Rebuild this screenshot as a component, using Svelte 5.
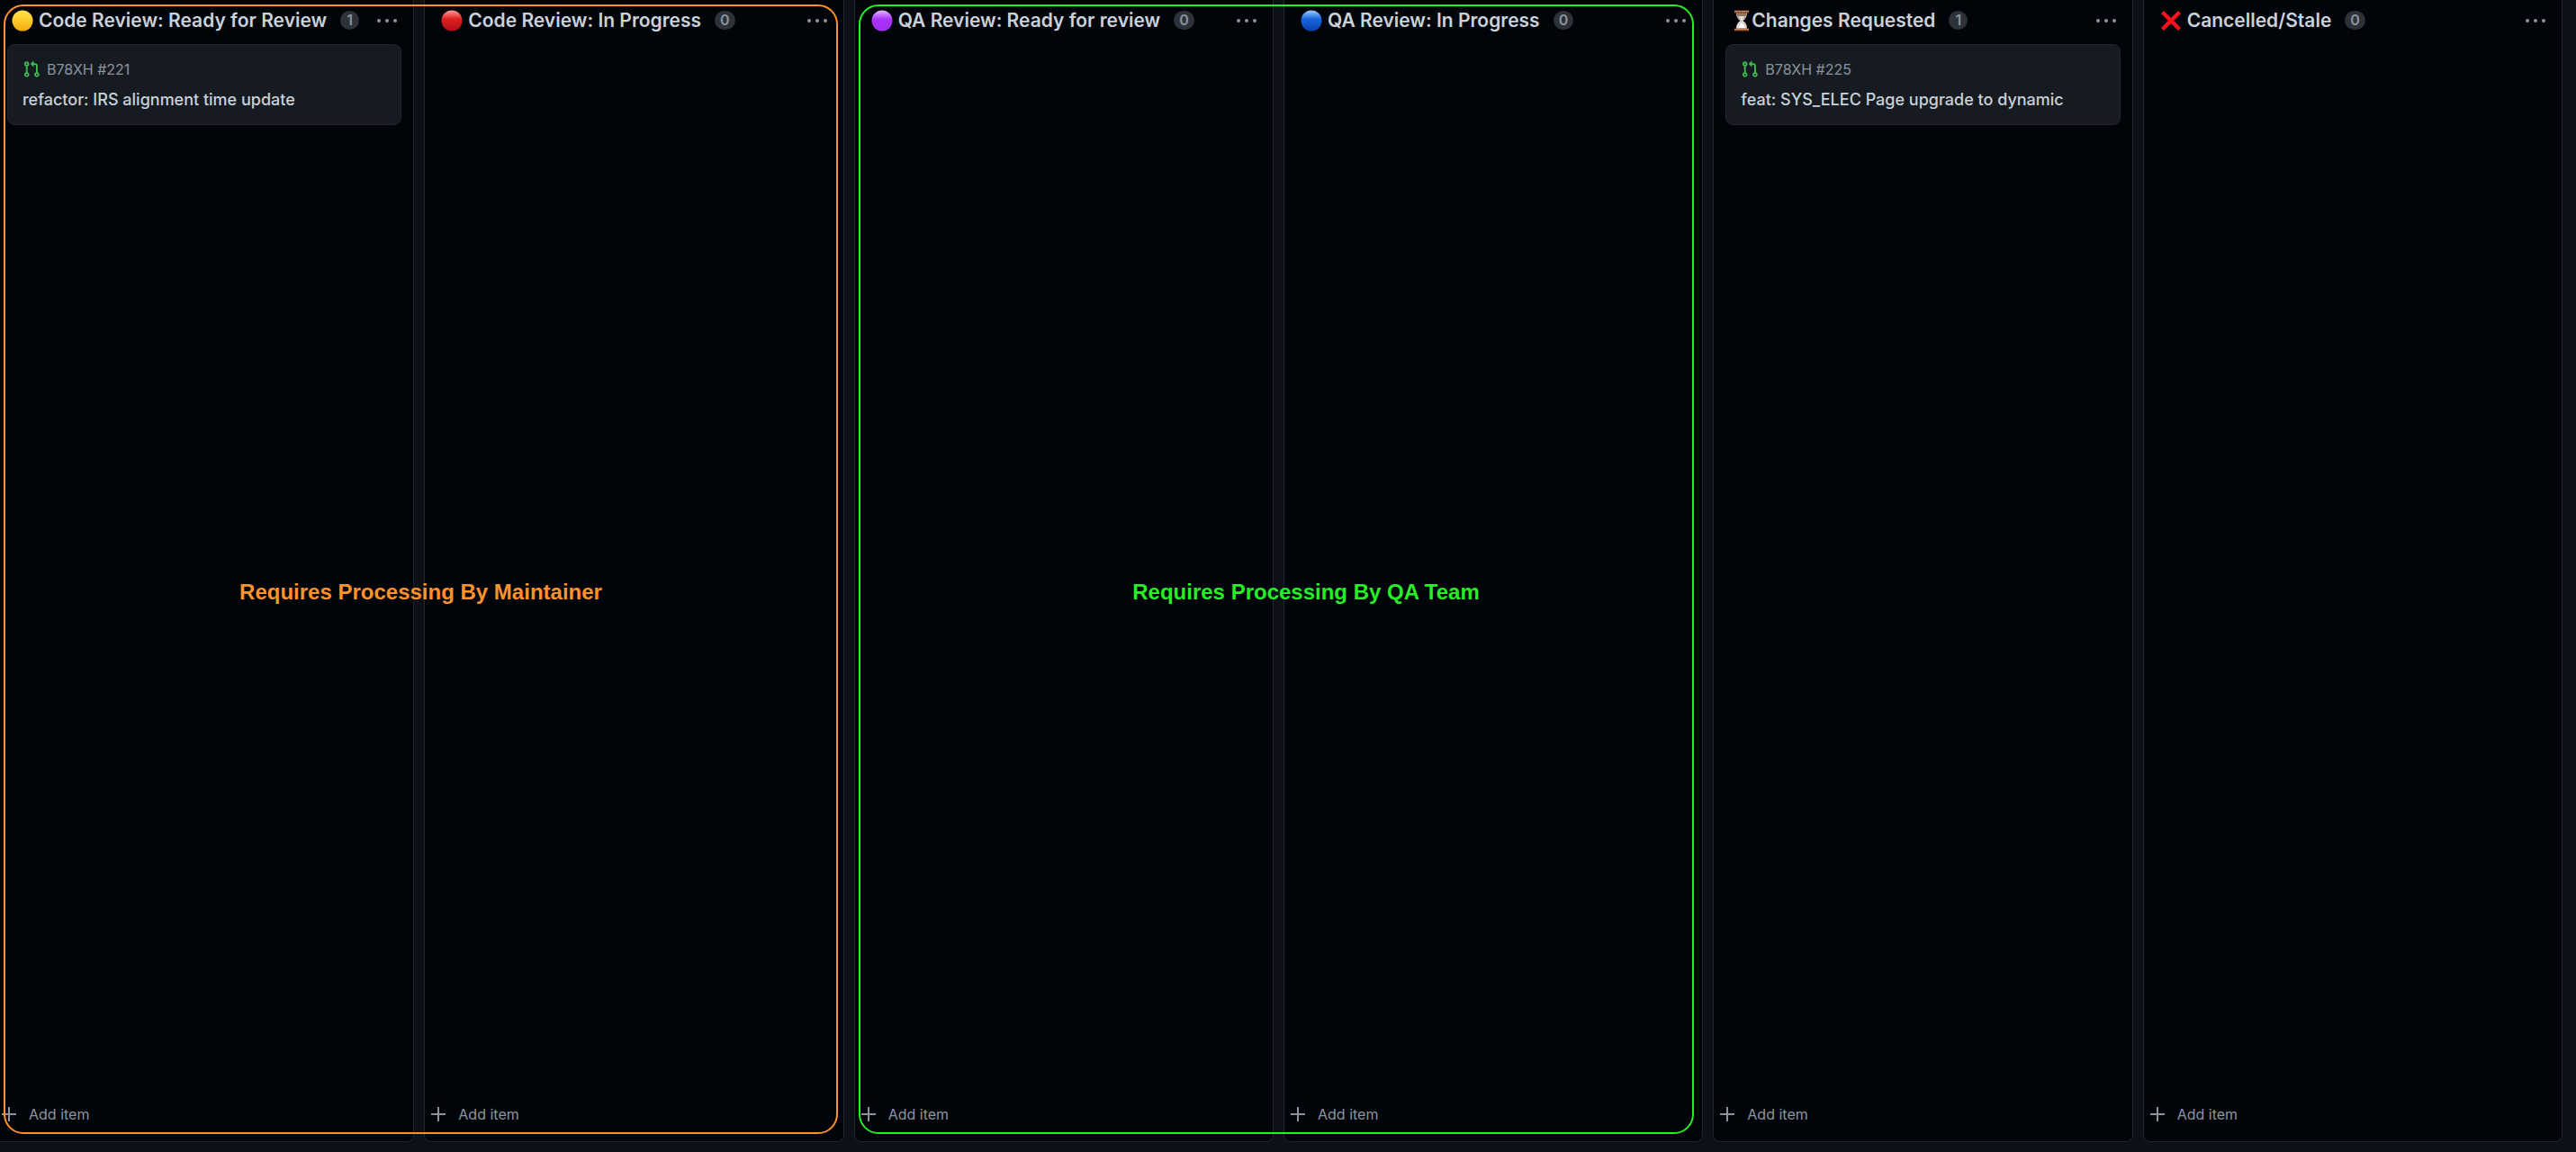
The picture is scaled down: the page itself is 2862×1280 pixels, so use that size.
<script>
  const columns = [
    { icon: 'yellow', title: 'Code Review: Ready for Review', count: 1, card: { ref: 'B78XH #221', title: 'refactor: IRS alignment time update' } },
    { icon: 'red', title: 'Code Review: In Progress', count: 0 },
    { icon: 'purple', title: 'QA Review: Ready for review', count: 0 },
    { icon: 'blue', title: 'QA Review: In Progress', count: 0 },
    { icon: 'hourglass', title: 'Changes Requested', count: 1, card: { ref: 'B78XH #225', title: 'feat: SYS_ELEC Page upgrade to dynamic' } },
    { icon: 'cross', title: 'Cancelled/Stale', count: 0 },
  ];
  const balls = {
    yellow: ['#ffe14a', '#ffd02e', '#f3a712'],
    red: ['#ff8f8f', '#df2020', '#b01016'],
    purple: ['#dfa8ff', '#a935f8', '#a02df0'],
    blue: ['#8fc4ff', '#1766dd', '#0b3fae'],
  };
</script>

<main class="board">
  {#each columns as col}
    <section class="column">
      <header>
        {#if balls[col.icon]}
          <svg class="emoji" viewBox="0 0 24 24" aria-hidden="true">
            <defs>
              <linearGradient id={col.icon} x1="0" y1="0" x2="0" y2="1">
                <stop offset="0.04" stop-color={balls[col.icon][0]} />
                <stop offset="0.42" stop-color={balls[col.icon][1]} />
                <stop offset="1" stop-color={balls[col.icon][2]} />
              </linearGradient>
            </defs>
            <circle cx="12" cy="12" r="11.5" fill="url(#{col.icon})" />
          </svg>
        {:else if col.icon === 'hourglass'}
          <svg class="emoji glass" viewBox="0 0 20 24" aria-hidden="true">
            <path d="M4 3h12c0 5-2 7-4.500 9 2.500 2 4.500 4 4.500 9H4c0-5 2-7 4.500-9C6 10 4 8 4 3z" fill="#d9d3cd" />
            <path d="M4.300 3h11.400c0 3-1 5-3 6.500H7.300C5.300 8 4.300 6 4.300 3z" fill="#8b7668" />
            <path d="M6 7h8l-4 4.500z" fill="#e8dccb" />
            <path d="M10 14l5 6.500H5z" fill="#fff" />
            <path d="M2 0.500h16v3H2zM2 20.500h16v3H2z" fill="#8a4a2b" />
            <path d="M2 1h16v1H2zM2 21h16v1H2z" fill="#c98a60" />
          </svg>
        {:else}
          <svg class="emoji" viewBox="0 0 24 24" aria-hidden="true">
            <path d="M2.500 2.500l19 19M21.500 2.500l-19 19" stroke="#f5101c" stroke-width="4.500" fill="none" />
          </svg>
        {/if}
        <h2>{col.title}</h2>
        <span class="count">{col.count}</span>
        <button class="more" aria-label="Column options">
          <svg viewBox="0 0 24 6" aria-hidden="true">
            <circle cx="3" cy="3" r="2" /><circle cx="12" cy="3" r="2" /><circle cx="21" cy="3" r="2" />
          </svg>
        </button>
      </header>
      {#if col.card}
        <article class="card">
          <div class="ref">
            <svg viewBox="0 0 16 16" aria-hidden="true">
              <path d="M1.500 3.250a2.250 2.250 0 1 1 3 2.122v5.256a2.251 2.251 0 1 1-1.500 0V5.372A2.250 2.250 0 0 1 1.500 3.250Zm5.677-.177L9.573.677A.250.250 0 0 1 10 .854V2.500h1A2.500 2.500 0 0 1 13.500 5v5.628a2.251 2.251 0 1 1-1.500 0V5a1 1 0 0 0-1-1h-1v1.646a.250.250 0 0 1-.427.177L7.177 3.427a.250.250 0 0 1 0-.354ZM3.750 2.500a.750.750 0 1 0 0 1.500.750.750 0 0 0 0-1.500Zm0 9.500a.750.750 0 1 0 0 1.500.750.750 0 0 0 0-1.500Zm8.250.750a.750.750 0 1 0 1.500 0 .750.750 0 0 0-1.500 0Z" />
            </svg>
            <span>{col.card.ref}</span>
          </div>
          <a href="#item">{col.card.title}</a>
        </article>
      {/if}
      <button class="add">
        <svg viewBox="0 0 16 16" aria-hidden="true"><path d="M8 0v16M0 8h16" /></svg>
        <span>Add item</span>
      </button>
    </section>
  {/each}
  <div class="frame maintainer"><span>Requires Processing By Maintainer</span></div>
  <div class="frame qa"><span>Requires Processing By QA Team</span></div>
</main>

<style>
  :global(body) {
    background: #0d1017;
    overflow: hidden;
  }
  .board {
    position: relative;
    box-sizing: border-box;
    height: 100vh;
    margin-left: -6px;
    padding: 0 15px 11px 0;
    display: grid;
    grid-template-columns: repeat(6, minmax(0, 1fr));
    column-gap: 11px;
    font-family: Inter, "Liberation Sans", sans-serif;
    color: #c9d1d9;
  }
  .column {
    box-sizing: border-box;
    display: flex;
    flex-direction: column;
    background: #010409;
    border: 1px solid #21262d;
    border-top: 0;
    border-radius: 0 0 8px 8px;
    padding: 0 13px;
  }
  header {
    display: flex;
    align-items: center;
    height: 49px;
    box-sizing: border-box;
    padding: 0 4px 4px 5px;
  }
  .emoji {
    width: 24px;
    height: 24px;
    flex: none;
    margin-right: 6px;
  }
  .glass {
    width: 20px;
    margin: 0 1px 0 3px;
  }
  h2 {
    margin: 0;
    font-size: 21px;
    line-height: 32px;
    font-weight: 600;
    white-space: nowrap;
  }
  .count {
    margin-left: 15px;
    min-width: 9px;
    padding: 0 6px;
    line-height: 21px;
    border-radius: 11px;
    background: #2d3138;
    color: #8b949e;
    font-size: 16px;
    font-weight: 600;
    text-align: center;
  }
  button {
    border: 0;
    padding: 0;
    background: none;
    font-family: inherit;
    color: #8b949e;
  }
  .more {
    margin-left: auto;
    display: flex;
  }
  .more svg {
    width: 24px;
    height: 6px;
    fill: currentColor;
  }
  .card {
    box-sizing: border-box;
    height: 90px;
    padding: 15px 16px;
    border: 1px solid #21262d;
    border-radius: 8px;
    background: #161b22;
  }
  .ref {
    display: flex;
    align-items: center;
    gap: 7px;
    font-size: 16px;
    line-height: 24px;
    color: #8b949e;
  }
  .ref svg {
    width: 20px;
    height: 20px;
    fill: #3fb950;
  }
  .card a {
    display: block;
    margin-top: 8px;
    font-size: 18px;
    line-height: 28px;
    font-weight: 500;
    white-space: nowrap;
    color: inherit;
    text-decoration: none;
  }
  .add {
    margin: auto 0 16px -6px;
    height: 28px;
    display: flex;
    align-items: center;
    gap: 14px;
    font-size: 16px;
  }
  .add svg {
    width: 16px;
    height: 16px;
    stroke: currentColor;
    stroke-width: 2;
  }
  .frame {
    position: absolute;
    box-sizing: border-box;
    top: 5px;
    bottom: 20px;
    border: 2px solid;
    border-radius: 22px;
    display: flex;
    align-items: center;
    justify-content: center;
    padding-top: 50px;
    font: bold 24px/28px "Liberation Sans", Arial, sans-serif;
    pointer-events: none;
  }
  .maintainer {
    left: 10px;
    width: 927px;
    color: #ff922b;
  }
  .qa {
    left: 960px;
    width: 928px;
    padding-left: 66px;
    color: #27ef27;
  }
</style>
